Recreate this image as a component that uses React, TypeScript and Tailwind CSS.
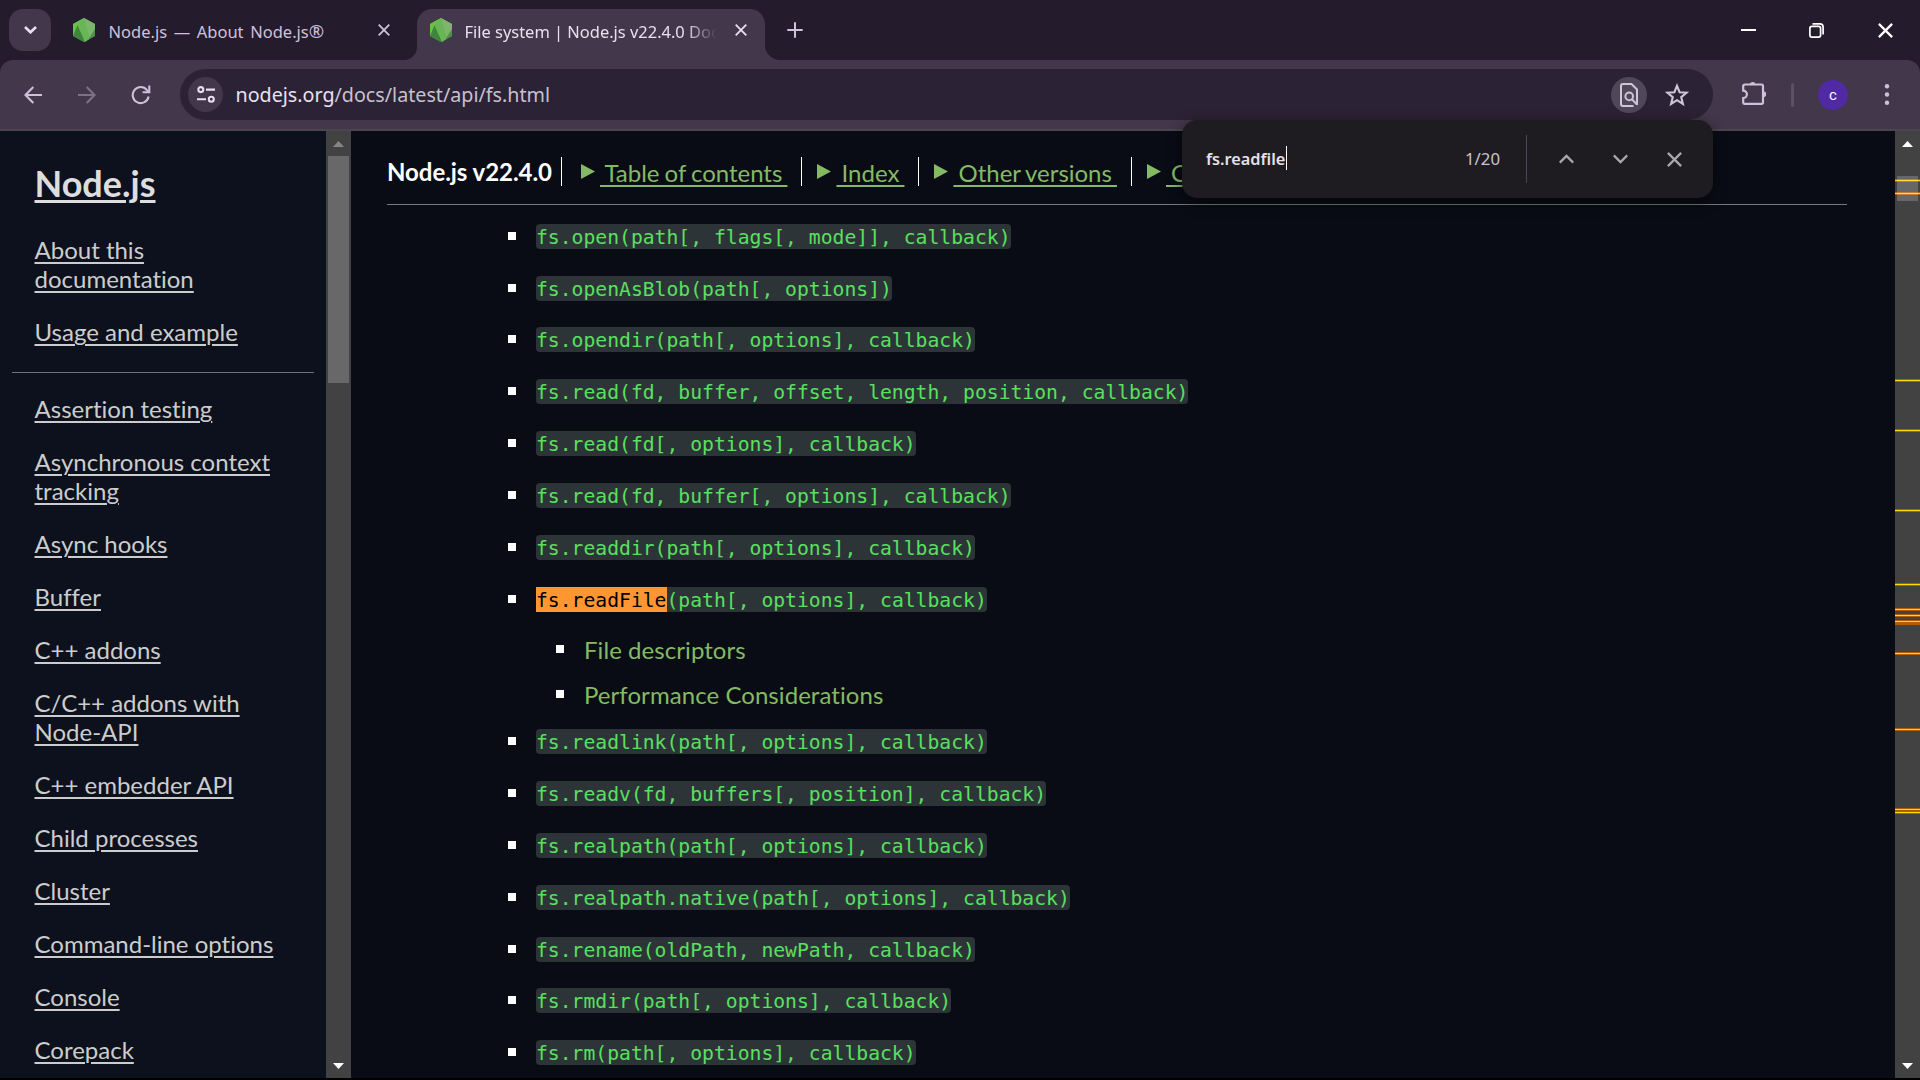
import type { ReactNode } from "react";

const uiFont = "font-['Noto_Sans','Open_Sans',sans-serif]";
const docFont = "font-['Lato',sans-serif] [font-variant-ligatures:none]";

function NodeIcon() {
  return (
    <svg className="h-6 w-[22px] shrink-0" viewBox="0 0 22 24">
      <path d="M11 0 22 6V18L11 24 0 18V6Z" fill="#5fa84e" />
      <path d="M11 0 0 6V18L6 14Z" fill="#6cc04a" />
      <path d="M0 18 4.5 7 12 24H11Z" fill="#3e863d" />
      <path d="M11 0 4.5 6.5 12 24 16.5 21Z" fill="#68b655" />
      <path d="M11 0 22 6V12L16.5 21Z" fill="#7cb56c" />
      <path d="M22 11V18L15 21.8Z" fill="#4c9145" />
    </svg>
  );
}

function Cross({ className }: { className: string }) {
  return (
    <svg className={className} viewBox="0 0 12 12" fill="none" stroke="currentColor" strokeWidth="1.8">
      <path d="M0.7 0.7 11.3 11.3M11.3 0.7 0.7 11.3" />
    </svg>
  );
}

function TabStrip() {
  return (
    <div className="flex h-[60px] items-start bg-[#241b2d] pl-[9px]">
      <button className="mt-[9px] flex size-[42px] items-center justify-center rounded-[14px] bg-[#42374b] text-[#e8e0ee]">
        <svg className="h-2 w-[13px]" viewBox="0 0 13 8" fill="none" stroke="currentColor" strokeWidth="2.6">
          <path d="M1 1 6.5 6.3 12 1" />
        </svg>
      </button>
      <div className="ml-[22px] flex h-[60px] w-[331px] items-center text-[#cfc1dc]">
        <NodeIcon />
        <span className="mt-[3px] ml-[13.5px] flex-1 text-[16.5px] leading-6 whitespace-pre [word-spacing:2.3px]">
          Node.js — About Node.js<span className="text-[18.5px] leading-none">®</span>
        </span>
        <Cross className="mr-[14px] size-3" />
      </div>
      <div className="flex h-[60px] w-[13px] items-end">
        <div className="size-[13px] bg-[radial-gradient(circle_at_0_0,transparent_12.5px,#42374b_13.5px)]" />
      </div>
      <div className="flex h-[51px] w-[348px] self-end rounded-t-[15px] bg-[#42374b] pl-[13px] text-[#e8e0ee]">
        <div className="flex h-[42px] w-full items-center">
          <NodeIcon />
          <span className="mt-[4px] ml-[12.5px] w-[252px] overflow-hidden text-[16.45px] whitespace-nowrap [mask-image:linear-gradient(to_right,black_220px,transparent_252px)]">
            File system | Node.js v22.4.0 Documentation
          </span>
          <Cross className="ml-[18px] size-3" />
        </div>
      </div>
      <div className="flex h-[60px] w-[15px] items-end">
        <div className="size-[15px] bg-[radial-gradient(circle_at_100%_0,transparent_14.5px,#42374b_15.5px)]" />
      </div>
      <svg className="mt-[22px] ml-[7px] size-4 text-[#cfc1dc]" viewBox="0 0 16 16" fill="none" stroke="currentColor" strokeWidth="2">
        <path d="M8 0.3V15.7M0.3 8H15.7" />
      </svg>
      <div className="ml-auto flex h-[60px] items-center pr-[27px] text-white">
        <svg className="size-[15px]" viewBox="0 0 15 15" stroke="currentColor" strokeWidth="2">
          <path d="M0 7H15" />
        </svg>
        <svg className="ml-[53px] size-[15px]" viewBox="0 0 15 15" fill="none" stroke="currentColor" strokeWidth="1.7">
          <rect x="0.9" y="3.4" width="10.7" height="10.7" rx="2" />
          <path d="M3.5 0.9H11A3.2 3.2 0 0 1 14.1 4V11.5" />
        </svg>
        <Cross className="ml-[54px] size-[15px]" />
      </div>
    </div>
  );
}

function Toolbar() {
  return (
    <div className="h-[71px] bg-[#241b2d]">
      <div className="flex h-full items-start rounded-t-[13px] border-b-2 border-[#4c4550] bg-[#42374b] pt-[9px] pl-6 text-[#cfbfdb]">
        <div className="flex h-[51px] items-center">
          <svg className="h-[18px] w-[18px]" viewBox="0 0 18 18" fill="none" stroke="currentColor" strokeWidth="2.1">
            <path d="M9.3 1 1.5 9 9.3 17M1.5 9H18" />
          </svg>
          <svg className="ml-9 h-[18px] w-[18px] text-[#7d7186]" viewBox="0 0 18 18" fill="none" stroke="currentColor" strokeWidth="2.1">
            <path d="M8.7 1 16.5 9 8.7 17M16.5 9H0" />
          </svg>
          <svg className="ml-[35px] size-[20px]" viewBox="0 0 20 20" fill="none" stroke="currentColor" strokeWidth="2.1">
            <path d="M17.6 11.5A8 8 0 1 1 16 5.1L17.6 7" />
            <path d="M18.3 0.5V7.2H11.6" />
          </svg>
        </div>
        <div className="ml-[29px] flex h-[51px] w-[1533px] items-center rounded-full bg-[#2c2235] pr-6 pl-2">
          <div className="flex size-[35px] items-center justify-center rounded-full bg-[#42374b] text-[#e8e0ee]">
            <svg className="h-[17px] w-[18px]" viewBox="0 0 18 17" fill="none" stroke="currentColor" strokeWidth="2.1">
              <circle cx="3.8" cy="3.6" r="2.5" />
              <path d="M9 3.6H18M0 13.2H9" />
              <circle cx="14.3" cy="13.2" r="2.5" />
            </svg>
          </div>
          <span className="ml-[12.5px] text-[19.7px] text-[#c8c0cf]">
            <span className="text-[#e9e0f0]">nodejs.org</span>/docs/latest/api/fs.html
          </span>
          <div className="ml-auto flex size-9 items-center justify-center rounded-full bg-[#51475a] text-[#cdc6d3]">
            <svg className="h-6 w-[18px]" viewBox="0 0 18 24" fill="none" stroke="currentColor" strokeWidth="2">
              <path d="M13.5 23H3A2 2 0 0 1 1 21V3A2 2 0 0 1 3 1H11.5L17 6.5V22" />
              <circle cx="9.2" cy="13.4" r="3.8" />
              <path d="M12 16.2 17 21.6" />
            </svg>
          </div>
          <svg className="ml-[18px] size-6 text-[#cdc6d3]" viewBox="0 0 24 24" fill="none" stroke="currentColor" strokeWidth="2.1">
            <path d="M12 2.8 14.6 9.2 21.5 9.7 16.2 14.1 17.9 21 12 17.2 6.1 21 7.8 14.1 2.5 9.7 9.4 9.2Z" />
          </svg>
        </div>
        <div className="ml-[29px] flex h-[51px] items-center">
          <svg className="mb-1 size-6" viewBox="0 0 24 24">
            <path
              d="M3 3.5H19.5Q21 3.5 21 5V21.5Q21 22.8 19.5 22.8H2.3Q1.2 22.8 1.2 21.5V17A3.6 3.6 0 0 0 1.2 9.6V5Q1.2 3.5 3 3.5Z"
              fill="none"
              stroke="currentColor"
              strokeWidth="2.2"
            />
            <path d="M7.8 3A3 2.8 0 0 1 13.6 3ZM21.5 10.2A2.7 3 0 0 1 21.5 16.2Z" fill="currentColor" />
          </svg>
          <div className="ml-[25px] h-6 w-[3px] rounded bg-[#5b5066]" />
          <div className="ml-6 flex size-[30px] items-center justify-center rounded-full bg-[#5029a5] text-[15px] leading-none text-white font-['Roboto',sans-serif]">
            <span className="mt-px">c</span>
          </div>
          <svg className="ml-[36px] h-[21px] w-[6px]" viewBox="0 0 6 21" fill="currentColor">
            <circle cx="3" cy="2.2" r="2.2" />
            <circle cx="3" cy="10.5" r="2.2" />
            <circle cx="3" cy="18.8" r="2.2" />
          </svg>
        </div>
      </div>
    </div>
  );
}

function FindBar() {
  return (
    <div className="absolute top-[120px] left-[1182px] flex h-[78px] w-[531px] items-center rounded-[15px] bg-[#1f1c21] pl-6 shadow-[0_4px_14px_rgba(0,0,0,0.55)]">
      <span className="text-[16.3px] font-semibold text-[#e6e0e9]">fs.readfile</span>
      <div className="mt-[-2px] ml-px h-6 w-px bg-white" />
      <span className="ml-auto text-[16.8px] text-[#c9c4cd]">1/20</span>
      <div className="ml-[26px] h-12 w-px bg-[#4d4655]" />
      <div className="mr-[31.5px] ml-[31.5px] flex items-center text-[#aaa6ad]">
        <svg className="h-[10px] w-[15px]" viewBox="0 0 15 10" fill="none" stroke="currentColor" strokeWidth="2.2">
          <path d="M0.8 8.6 7.5 1.9 14.2 8.6" />
        </svg>
        <svg className="ml-[39px] h-[10px] w-[15px]" viewBox="0 0 15 10" fill="none" stroke="currentColor" strokeWidth="2.2">
          <path d="M0.8 1.4 7.5 8.1 14.2 1.4" />
        </svg>
        <Cross className="ml-[39px] size-[15px]" />
      </div>
    </div>
  );
}

function Arrow({ down, dim }: { down?: boolean; dim?: boolean }) {
  return (
    <svg className={dim ? "h-[6px] w-[11px] text-[#868686]" : "h-[6px] w-[11px] text-white"} viewBox="0 0 11 6" fill="currentColor">
      <path d={down ? "M0 0H11L5.5 6Z" : "M0 6H11L5.5 0Z"} />
    </svg>
  );
}

const intro = ["About this documentation", "Usage and example"];
const modules = [
  "Assertion testing",
  "Asynchronous context tracking",
  "Async hooks",
  "Buffer",
  "C++ addons",
  "C/C++ addons with Node-API",
  "C++ embedder API",
  "Child processes",
  "Cluster",
  "Command-line options",
  "Console",
  "Corepack",
];

function SideLinks({ items }: { items: string[] }) {
  return (
    <ul className="flex w-[279px] flex-col gap-[24.25px] pl-[34.5px]">
      {items.map((item) => (
        <li key={item}>
          <a className="underline decoration-2 underline-offset-[2.5px]">{item}</a>
        </li>
      ))}
    </ul>
  );
}

function Sidebar() {
  return (
    <div className="flex w-[351px] shrink-0">
      <nav className={`h-full w-[326px] overflow-hidden bg-[#0d111d] pt-[31px] text-[24px] leading-[28.8px] text-[#cccccc] ${docFont}`}>
        <div className="mb-[31.2px] pl-[34.5px] text-[36px] leading-[43.2px] font-bold text-[#dddddd]">
          <a className="underline decoration-[3px] underline-offset-[2.5px]">Node.js</a>
        </div>
        <SideLinks items={intro} />
        <div className="mt-[25px] mb-[22.2px] ml-3 h-px w-[302px] bg-[#6e7378]" />
        <SideLinks items={modules} />
      </nav>
      <div className="flex h-full w-[25px] flex-col items-center bg-[#424242] pt-[10px] pb-[9px]">
        <Arrow dim />
        <div className="mt-[9px] h-[227px] w-[21px] bg-[#686868]" />
        <div className="mt-auto">
          <Arrow down />
        </div>
      </div>
    </div>
  );
}

function MenuItem({ label, first }: { label: string; first?: boolean }) {
  return (
    <div className={first ? "flex h-[29px] items-center border-l border-white pl-[19px]" : "flex h-[29px] items-center border-l border-white pl-[15px]"}>
      <svg className="h-[15px] w-[14px] text-[#84ba64]" viewBox="0 0 14 15" fill="currentColor">
        <path d="M0 0 14 7.5 0 15Z" />
      </svg>
      <a className="mt-[3px] mr-[14px] ml-[5px] tracking-[-0.02px] whitespace-pre text-[#84ba64] underline decoration-2 underline-offset-[2.5px] [word-spacing:-1px]">{` ${label} `}</a>
    </div>
  );
}

type Entry = { code: string; match?: string; children?: string[] };

const entries: Entry[] = [
  { code: "fs.open(path[, flags[, mode]], callback)" },
  { code: "fs.openAsBlob(path[, options])" },
  { code: "fs.opendir(path[, options], callback)" },
  { code: "fs.read(fd, buffer, offset, length, position, callback)" },
  { code: "fs.read(fd[, options], callback)" },
  { code: "fs.read(fd, buffer[, options], callback)" },
  { code: "fs.readdir(path[, options], callback)" },
  { match: "fs.readFile", code: "(path[, options], callback)", children: ["File descriptors", "Performance Considerations"] },
  { code: "fs.readlink(path[, options], callback)" },
  { code: "fs.readv(fd, buffers[, position], callback)" },
  { code: "fs.realpath(path[, options], callback)" },
  { code: "fs.realpath.native(path[, options], callback)" },
  { code: "fs.rename(oldPath, newPath, callback)" },
  { code: "fs.rmdir(path[, options], callback)" },
  { code: "fs.rm(path[, options], callback)" },
];

function Bullet() {
  return <div className="mb-px size-2 bg-white" />;
}

function CodeRow({ children }: { children: ReactNode }) {
  return (
    <div className="flex h-[51.88px] items-center">
      <Bullet />
      {children}
    </div>
  );
}

function Main() {
  return (
    <main className={`flex min-w-0 flex-1 flex-col overflow-hidden bg-[#090c15] pl-9 text-[24px] leading-[28.8px] ${docFont}`}>
      <div className="flex h-[74px] w-[1460px] shrink-0 items-start border-b border-[#777a78] pt-[26px]">
        <div className="mt-px w-[174px] font-bold tracking-[-0.05px] whitespace-nowrap text-white">Node.js v22.4.0</div>
        <MenuItem first label="Table of contents" />
        <MenuItem label="Index" />
        <MenuItem label="Other versions" />
        <MenuItem label="Options" />
      </div>
      <ul className="flex flex-col pt-[5.3px] pl-[121px]">
        {entries.map(({ code, match, children }) => (
          <li key={(match ?? "") + code}>
            <CodeRow>
              <code className="ml-5 flex h-[25px] items-start rounded-[4px] bg-[#2d3437] text-[19.72px] leading-[27px] whitespace-pre text-[#58e05f] font-['DejaVu_Sans_Mono',monospace]">
                {match && <mark className="h-[25px] bg-[#ff9632] text-black">{match}</mark>}
                {code}
              </code>
            </CodeRow>
            {children && (
              <ul className="h-[90.3px] pt-[1.5px] pl-12">
                {children.map((child) => (
                  <li key={child} className="flex h-[45px] items-center gap-5">
                    <Bullet />
                    <a className="mt-[2px] tracking-[0.06px] text-[#84ba64]">{child}</a>
                  </li>
                ))}
              </ul>
            )}
          </li>
        ))}
      </ul>
    </main>
  );
}

/* Vertical offsets of the search hits, relative to the scrollbar's top. */
const hits = [48, 61, 248, 298, 378, 452, 477, 483, 489, 521, 597, 677, 680];

function PageScrollbar() {
  return (
    <div className="relative flex w-[25px] shrink-0 flex-col items-center justify-between bg-[#424242] pt-[10px] pb-[9px]">
      <Arrow />
      <Arrow down />
      <div className="absolute top-[491px] left-0 h-[3px] w-full bg-[#b06000]" />
      {hits.map((y) => (
        <div key={y} className="absolute left-0 h-[3px] w-full border-y border-[#b06000] bg-[#ffdd00]" style={{ top: y }} />
      ))}
      <div className="absolute top-[45px] left-[2px] h-[25px] w-[21px] bg-white/20" />
    </div>
  );
}

export default function App() {
  return (
    <div className={`relative flex h-[1080px] w-[1920px] flex-col overflow-hidden bg-black ${uiFont}`}>
      <TabStrip />
      <Toolbar />
      <div className="flex h-[947px]">
        <Sidebar />
        <Main />
        <PageScrollbar />
      </div>
      <FindBar />
    </div>
  );
}
